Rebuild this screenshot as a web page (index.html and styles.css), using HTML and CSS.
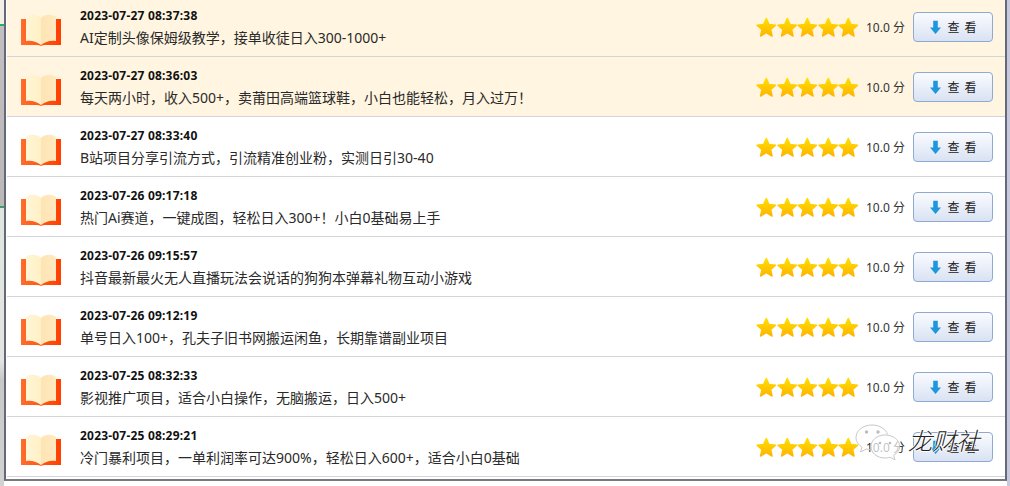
FILE: index.html
```html
<!DOCTYPE html>
<html lang="zh-CN">
<head>
<meta charset="utf-8">
<title>项目列表</title>
<link rel="stylesheet" href="styles.css">
</head>
<body>
<svg class="defs" width="0" height="0" aria-hidden="true">
  <defs>
    <linearGradient id="starFill" x1="0" y1="0" x2="0" y2="1">
      <stop offset="0" stop-color="#ffe000"/>
      <stop offset="1" stop-color="#ffb400"/>
    </linearGradient>
    <linearGradient id="coverFill" x1="0" y1="0" x2="1" y2="0">
      <stop offset="0" stop-color="#ff6d2c"/>
      <stop offset="1" stop-color="#ff3f00"/>
    </linearGradient>
    <linearGradient id="pageLeft" x1="0" y1="0" x2="1" y2="0">
      <stop offset="0" stop-color="#fff6d6"/>
      <stop offset="1" stop-color="#fff0c6"/>
    </linearGradient>
    <linearGradient id="pageRight" x1="0" y1="0" x2="1" y2="0">
      <stop offset="0" stop-color="#ffe4b2"/>
      <stop offset="1" stop-color="#ffeac2"/>
    </linearGradient>
    <symbol id="book" viewBox="0 0 42 34">
      <path fill="url(#coverFill)" d="M1 7h5v20c6-1 11 0 15 3 4-3 9-4 15-3V7h5v26H26c-2 0-4 0-5 1-1-1-3-1-5-1H1z"/>
      <path fill="url(#pageLeft)" d="M6 5c4-3 11-3 15 1v27c-4-3-9-5-15-4z"/>
      <path fill="url(#pageRight)" d="M36 5c-4-3-11-3-15 1v27c4-3 9-5 15-4z"/>
    </symbol>
    <symbol id="star" viewBox="0 0 21 21">
      <path fill="url(#starFill)" stroke="url(#starFill)" stroke-width="1.400" stroke-linejoin="round" d="M10.500 1.200l2.800 6.200 6.700.7-5 4.500 1.400 6.600-5.900-3.400-5.900 3.400 1.400-6.600-5-4.500 6.700-.7z"/>
    </symbol>
    <symbol id="arrow" viewBox="0 0 12 15">
      <path fill="#1f97de" d="M3.500 0h5v7.500H12L6 14.500 0 7.500h3.500z"/>
    </symbol>
  </defs>
</svg>

<div class="page">
  <div class="strip-left"></div>
  <main class="frame">
    <ul class="list">
      <li class="row row-hot">
        <svg class="book"><use href="#book"/></svg>
        <div class="info"><time class="when">2023-07-27 08:37:38</time><p class="title">AI定制头像保姆级教学，接单收徒日入300-1000+</p></div>
        <div class="stars"><svg class="star"><use href="#star"/></svg><svg class="star"><use href="#star"/></svg><svg class="star"><use href="#star"/></svg><svg class="star"><use href="#star"/></svg><svg class="star"><use href="#star"/></svg></div>
        <span class="score">10.0 分</span>
        <button class="view"><svg class="arrow"><use href="#arrow"/></svg>查 看</button>
      </li>
      <li class="row row-hot">
        <svg class="book"><use href="#book"/></svg>
        <div class="info"><time class="when">2023-07-27 08:36:03</time><p class="title">每天两小时，收入500+，卖莆田高端篮球鞋，小白也能轻松，月入过万！</p></div>
        <div class="stars"><svg class="star"><use href="#star"/></svg><svg class="star"><use href="#star"/></svg><svg class="star"><use href="#star"/></svg><svg class="star"><use href="#star"/></svg><svg class="star"><use href="#star"/></svg></div>
        <span class="score">10.0 分</span>
        <button class="view"><svg class="arrow"><use href="#arrow"/></svg>查 看</button>
      </li>
      <li class="row">
        <svg class="book"><use href="#book"/></svg>
        <div class="info"><time class="when">2023-07-27 08:33:40</time><p class="title">B站项目分享引流方式，引流精准创业粉，实测日引30-40</p></div>
        <div class="stars"><svg class="star"><use href="#star"/></svg><svg class="star"><use href="#star"/></svg><svg class="star"><use href="#star"/></svg><svg class="star"><use href="#star"/></svg><svg class="star"><use href="#star"/></svg></div>
        <span class="score">10.0 分</span>
        <button class="view"><svg class="arrow"><use href="#arrow"/></svg>查 看</button>
      </li>
      <li class="row">
        <svg class="book"><use href="#book"/></svg>
        <div class="info"><time class="when">2023-07-26 09:17:18</time><p class="title">热门Ai赛道，一键成图，轻松日入300+！小白0基础易上手</p></div>
        <div class="stars"><svg class="star"><use href="#star"/></svg><svg class="star"><use href="#star"/></svg><svg class="star"><use href="#star"/></svg><svg class="star"><use href="#star"/></svg><svg class="star"><use href="#star"/></svg></div>
        <span class="score">10.0 分</span>
        <button class="view"><svg class="arrow"><use href="#arrow"/></svg>查 看</button>
      </li>
      <li class="row">
        <svg class="book"><use href="#book"/></svg>
        <div class="info"><time class="when">2023-07-26 09:15:57</time><p class="title">抖音最新最火无人直播玩法会说话的狗狗本弹幕礼物互动小游戏</p></div>
        <div class="stars"><svg class="star"><use href="#star"/></svg><svg class="star"><use href="#star"/></svg><svg class="star"><use href="#star"/></svg><svg class="star"><use href="#star"/></svg><svg class="star"><use href="#star"/></svg></div>
        <span class="score">10.0 分</span>
        <button class="view"><svg class="arrow"><use href="#arrow"/></svg>查 看</button>
      </li>
      <li class="row">
        <svg class="book"><use href="#book"/></svg>
        <div class="info"><time class="when">2023-07-26 09:12:19</time><p class="title">单号日入100+，孔夫子旧书网搬运闲鱼，长期靠谱副业项目</p></div>
        <div class="stars"><svg class="star"><use href="#star"/></svg><svg class="star"><use href="#star"/></svg><svg class="star"><use href="#star"/></svg><svg class="star"><use href="#star"/></svg><svg class="star"><use href="#star"/></svg></div>
        <span class="score">10.0 分</span>
        <button class="view"><svg class="arrow"><use href="#arrow"/></svg>查 看</button>
      </li>
      <li class="row">
        <svg class="book"><use href="#book"/></svg>
        <div class="info"><time class="when">2023-07-25 08:32:33</time><p class="title">影视推广项目，适合小白操作，无脑搬运，日入500+</p></div>
        <div class="stars"><svg class="star"><use href="#star"/></svg><svg class="star"><use href="#star"/></svg><svg class="star"><use href="#star"/></svg><svg class="star"><use href="#star"/></svg><svg class="star"><use href="#star"/></svg></div>
        <span class="score">10.0 分</span>
        <button class="view"><svg class="arrow"><use href="#arrow"/></svg>查 看</button>
      </li>
      <li class="row">
        <svg class="book"><use href="#book"/></svg>
        <div class="info"><time class="when">2023-07-25 08:29:21</time><p class="title">冷门暴利项目，一单利润率可达900%，轻松日入600+，适合小白0基础</p></div>
        <div class="stars"><svg class="star"><use href="#star"/></svg><svg class="star"><use href="#star"/></svg><svg class="star"><use href="#star"/></svg><svg class="star"><use href="#star"/></svg><svg class="star"><use href="#star"/></svg></div>
        <span class="score">10.0 分</span>
        <button class="view"><svg class="arrow"><use href="#arrow"/></svg>查 看</button>
      </li>
    </ul>
  </main>
  <div class="strip-right"></div>
</div>

<div class="watermark">
  <svg class="wechat" viewBox="0 0 46 36">
    <path class="bubble" d="M17 1C8 1 1 6.500 1 13.500c0 4 2.300 7.300 6 9.700L5.500 28l6-3c1.500.4 3 .6 4.500.7"/>
    <path class="bubble" d="M17 1c7.500 0 14 4 15.500 9.500"/>
    <path class="bubble bubble-front" d="M30 11c-8 0-14 5-14 11.500S22 34 30 34c1.800 0 3.500-.3 5-.8l5 2.800-1.300-4.700c3.700-2.200 6-5.500 6-8.800C44.700 16 38 11 30 11z"/>
    <circle class="dot" cx="11.500" cy="8" r="1.700"/>
    <circle class="dot" cx="23" cy="8" r="1.700"/>
    <circle class="dot" cx="25" cy="19" r="1.300"/>
    <circle class="dot" cx="35" cy="19" r="1.300"/>
  </svg>
  <span class="brand">龙财社</span>
</div>
</body>
</html>
```

FILE: styles.css
```css
* {
  box-sizing: border-box;
}

html,
body {
  margin: 0;
  padding: 0;
  background: #fff;
}

body {
  position: relative;
  width: 1010px;
  height: 486px;
  overflow: hidden;
  font-family: "Noto Sans", "Noto Sans CJK SC", sans-serif;
  color: #222;
}

.defs {
  position: absolute;
}

.page {
  display: flex;
  height: 486px;
}

.strip-left {
  width: 4px;
  background: linear-gradient(
    to bottom,
    #f3efe4 0,
    #f3efe4 24px,
    #1fb35c 24px,
    #1fb35c 26px,
    #c2bec2 26px,
    #bcb8b8 206px,
    #3f9f6c 206px,
    #3f9f6c 208px,
    #dfe6de 208px,
    #e4e4e2 360px,
    #c8c8c8 380px,
    #d2d2d2 486px
  );
}

.strip-right {
  width: 3px;
  background: #c9c9de;
}

.frame {
  flex: 1;
  height: 481px;
  overflow: hidden;
  background: #fff;
  border-left: 2px solid #636978;
  border-right: 2px solid #636978;
  border-bottom: 2px solid #77797c;
  padding-left: 1px;
}

.list {
  margin: -3px 0 0;
  padding: 0;
  list-style: none;
}

.row {
  display: flex;
  align-items: center;
  height: 60px;
  padding: 0 12px 0 13px;
  border-bottom: 1px solid #d4d4da;
}

.row-hot {
  background: #fff5e0;
}

.book {
  width: 42px;
  height: 34px;
  flex: none;
  margin-right: 18px;
  margin-top: 4px;
  filter: blur(0.4px);
}

.info {
  flex: 1;
  min-width: 0;
  padding-top: 2px;
}

.when {
  display: block;
  height: 17px;
  font-size: 12px;
  line-height: 17px;
  font-weight: 700;
  letter-spacing: 0.2px;
  color: #111;
}

.title {
  margin: 4px 0 0;
  height: 20px;
  font-size: 14px;
  line-height: 20px;
  color: #2a2a2a;
}

.stars {
  display: flex;
  width: 103px;
  margin-right: 7px;
  padding-top: 2px;
}

.star {
  width: 20.600px;
  height: 21px;
  flex: none;
}

.score {
  width: 39px;
  margin-right: 8px;
  font-size: 12px;
  color: #333;
  white-space: nowrap;
}

.view {
  display: flex;
  align-items: center;
  justify-content: center;
  gap: 6px;
  width: 80px;
  height: 30px;
  padding: 1px 0 0 2px;
  border: 1px solid #8ea9d2;
  border-radius: 4px;
  background: linear-gradient(to bottom, #fafbfe, #d9e2f3);
  font-family: inherit;
  font-size: 12px;
  letter-spacing: 1px;
  color: #222;
}

.arrow {
  width: 11px;
  height: 15px;
  flex: none;
}

.watermark {
  position: absolute;
  left: 855px;
  top: 424px;
  display: flex;
  align-items: center;
  gap: 7px;
}

.wechat {
  width: 46px;
  height: 36px;
  flex: none;
}

.bubble {
  fill: none;
  stroke: #c8c8c8;
  stroke-width: 1;
}

.bubble-front {
  fill: rgba(255, 255, 255, 0.7);
}

.dot {
  fill: #bbb;
}

.brand {
  margin-top: -4px;
  font-family: "Noto Sans CJK SC", sans-serif;
  font-size: 24px;
  font-weight: 300;
  font-style: italic;
  line-height: 30px;
  color: #222;
  text-shadow: 1px 0 0 #fff, -1px 0 0 #fff, 0 1px 0 #fff;
}
```
